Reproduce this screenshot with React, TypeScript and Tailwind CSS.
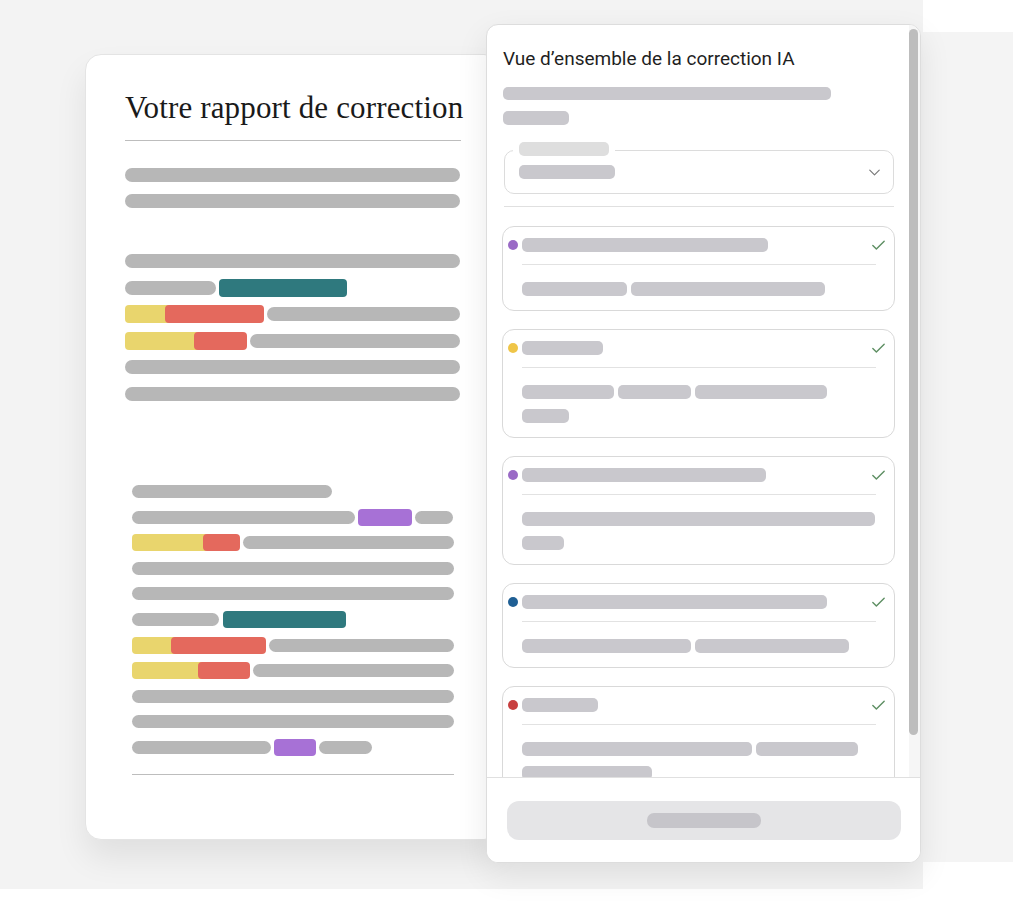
import React from "react";
import { Check, ChevronDown } from "lucide-react";

const G = "bg-[#b7b7b7]";

function Gray({ w, h = 14 }: { w: number; h?: number }) {
  return <div className={`${G} rounded-full shrink-0`} style={{ width: w, height: h }} />;
}
function Block({ w, color, h = 18 }: { w: number; color: string; h?: number }) {
  return <div className={`${color} rounded-[4px] shrink-0`} style={{ width: w, height: h }} />;
}
function YR({ y, r, h = 18 }: { y: number; r: number; h?: number }) {
  return (
    <>
      <div className="bg-[#e9d56d] rounded-l-[4px] shrink-0" style={{ width: y + 6, height: h }} />
      <div className="bg-[#e4695d] rounded-[4px] shrink-0 -ml-[9px]" style={{ width: r, height: h }} />
    </>
  );
}

function Row({ children, h = 18, gap = 3 }: { children: React.ReactNode; h?: number; gap?: number }) {
  return (
    <div className="flex items-center" style={{ height: h, gap }}>
      {children}
    </div>
  );
}

function LeftCard() {
  return (
    <div className="ml-[85px] mt-[54px] w-[415px] h-[786px] shrink-0 bg-white rounded-[16px] border border-[#e4e4e4] shadow-[0_18px_32px_rgba(0,0,0,0.08)] pl-[39px] pt-[35px]">
      <div
        className="text-[31px] leading-[36px] tracking-[0.15px] text-[#1a1a1a] whitespace-nowrap"
        style={{ fontFamily: '"Liberation Serif", "Times New Roman", serif' }}
      >
        Votre rapport de correction
      </div>
      <div className="mt-[14px] w-[336px] h-px bg-[#bdbdbd]" />
      <div className="mt-[25px] flex flex-col gap-[8px]">
        <Row><Gray w={335} /></Row>
        <Row><Gray w={335} /></Row>
      </div>
      <div className="mt-[42px] flex flex-col gap-[8.5px]">
        <Row><Gray w={335} /></Row>
        <Row><Gray w={91} /><Block w={128} color="bg-[#2f797e]" /></Row>
        <Row><YR y={40} r={99} /><Gray w={193} /></Row>
        <Row><YR y={69} r={53} /><Gray w={210} /></Row>
        <Row><Gray w={335} /></Row>
        <Row><Gray w={335} /></Row>
      </div>
      <div className="ml-[7px] mt-[80px] w-[322px] flex flex-col gap-[7.6px]">
        <Row><Gray w={200} h={13} /></Row>
        <Row><Gray w={223} h={13} /><Block w={54} h={17} color="bg-[#a771d6]" /><Gray w={38} h={13} /></Row>
        <Row><YR y={71} r={37} h={17} /><Gray w={211} h={13} /></Row>
        <Row><Gray w={322} h={13} /></Row>
        <Row><Gray w={322} h={13} /></Row>
        <Row gap={4}><Gray w={87} h={13} /><Block w={123} h={17} color="bg-[#2f797e]" /></Row>
        <Row><YR y={39} r={95} h={17} /><Gray w={185} h={13} /></Row>
        <Row><YR y={66} r={52} h={17} /><Gray w={201} h={13} /></Row>
        <Row><Gray w={322} h={13} /></Row>
        <Row><Gray w={322} h={13} /></Row>
        <Row><Gray w={139} h={13} /><Block w={42} h={17} color="bg-[#a771d6]" /><Gray w={53} h={13} /></Row>
        <div className="mt-[10px] w-[322px] h-px bg-[#bdbdbd]" />
      </div>
    </div>
  );
}

const PB = "bg-[#c9c8cd] rounded-[5px] shrink-0";

function PBar({ w, h = 14 }: { w: number; h?: number }) {
  return <div className={PB} style={{ width: w, height: h }} />;
}

function Card({ dot, head, rows }: { dot: string; head: number; rows: number[][] }) {
  return (
    <div className="rounded-[12px] border border-[#d9d9d9] pt-[11px] pb-[14px] shrink-0">
      <div className="flex items-center h-[14px] pl-[5px] pr-[7px]">
        <div className={`w-[10px] h-[10px] rounded-full ${dot}`} />
        <div className="ml-[4px]">
          <PBar w={head} />
        </div>
        <Check className="ml-auto text-[#5e8f63]" size={17} strokeWidth={2} />
      </div>
      <div className="ml-[19px] mr-[18px] mt-[12px] h-px bg-[#e2e2e2]" />
      <div className="ml-[19px] mt-[17px] flex flex-col gap-[10px]">
        {rows.map((r, i) => (
          <div key={i} className="flex gap-[4px]">
            {r.map((w, j) => (
              <PBar key={j} w={w} />
            ))}
          </div>
        ))}
      </div>
    </div>
  );
}

function Panel() {
  return (
    <div className="-ml-[14px] mt-[24px] w-[435px] h-[839px] shrink-0 relative z-10 bg-white rounded-[12px] border border-[#dddddd] shadow-[0_12px_32px_rgba(0,0,0,0.09)] flex flex-col overflow-hidden">
      <div className="flex-1 min-h-0 flex overflow-hidden">
        <div className="w-[422px] shrink-0 pl-[15px] pr-[14px] pt-[24px] flex flex-col">
          <div
            className="ml-[1px] text-[19px] leading-[20px] text-[#1f1f1f] whitespace-nowrap"
            style={{ fontFamily: 'Roboto, "Noto Sans", sans-serif' }}
          >
            Vue d’ensemble de la correction IA
          </div>
          <div className="ml-[1px] mt-[18px]"><PBar w={328} h={13} /></div>
          <div className="ml-[1px] mt-[11px]"><PBar w={66} /></div>
          <div className="relative ml-[2px] mr-[1px] mt-[25px] h-[44px] rounded-[10px] border border-[#dcdcdc] flex items-center pl-[14px] pr-[9px] shrink-0">
            <div className="absolute left-[8px] -top-[9px] bg-white px-[6px]">
              <div className="w-[90px] h-[14px] rounded-[5px] bg-[#dedede]" />
            </div>
            <PBar w={96} />
            <ChevronDown className="ml-auto text-[#7a7a7a]" size={19} strokeWidth={1.5} />
          </div>
          <div className="ml-[2px] mr-[1px] mt-[12px] h-px bg-[#e0e0e0] shrink-0" />
          <div className="mt-[19px] flex flex-col gap-[18px]">
            <Card dot="bg-[#9a6ac6]" head={246} rows={[[105, 194]]} />
            <Card dot="bg-[#efc548]" head={81} rows={[[92, 73, 132], [47]]} />
            <Card dot="bg-[#9a6ac6]" head={244} rows={[[353], [42]]} />
            <Card dot="bg-[#1f5f94]" head={305} rows={[[169, 154]]} />
            <Card dot="bg-[#c83f3f]" head={76} rows={[[230, 102], [130]]} />
          </div>
        </div>
        <div className="w-[11px] shrink-0 bg-[#f6f6f6] pt-[4px]">
          <div className="w-[9px] h-[706px] rounded-full bg-[#bdbdbd]" />
        </div>
      </div>
      <div className="h-[85px] shrink-0 border-t border-[#e0e0e0] bg-white pt-[23px] pl-[20px] pr-[19px]">
        <div className="h-[39px] rounded-[12px] bg-[#e5e5e7] flex items-center justify-center">
          <div className="w-[114px] h-[15px] rounded-[7px] bg-[#c6c5ca]" />
        </div>
      </div>
    </div>
  );
}

export default function App() {
  return (
    <div className="w-[1013px] h-[902px] bg-white flex items-start overflow-hidden">
      <div className="w-[923px] h-[889px] shrink-0 bg-[#f3f3f3] flex items-start">
        <LeftCard />
        <Panel />
      </div>
      <div className="mt-[32px] w-[90px] h-[830px] shrink-0 bg-[#f4f4f4]" />
    </div>
  );
}
